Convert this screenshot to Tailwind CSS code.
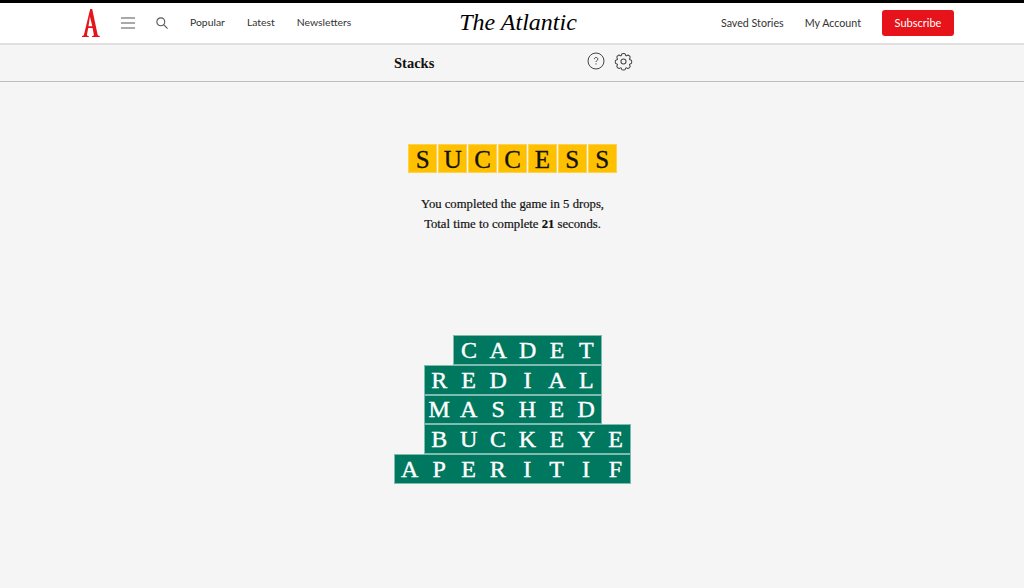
<!DOCTYPE html>
<html lang="en">
<head>
  <meta charset="UTF-8" />
  <title>Stacks | The Atlantic</title>
  <script src="https://cdn.jsdelivr.net/npm/@tailwindcss/browser@4"></script>
</head>
<body class="bg-[#f5f5f5] h-[588px] overflow-hidden text-[#111] font-['Liberation_Serif',serif]">

  <!-- Navbar -->
  <header class="bg-white h-[45px] border-t-[3px] border-black border-b-2 border-b-[#e0e0e0] flex items-center pl-[82px] pr-[70px] font-['Lato',sans-serif] text-[10.7px] text-[#333]">
    <svg class="w-[18px] h-[28px]" viewBox="0 0 18 28" fill="#e7131a">
      <path d="M8.2 0h2L15.6 25.6c.2 1 .8 1.3 2.2 1.4V28H10v-1c1.6-.1 2-.4 1.8-1.5L10.6 19H6.2L5 25.5c-.2 1.1.3 1.4 1.8 1.5v1H0v-1c1.3-.1 1.8-.5 2-1.5zM7.9 7.5L6.5 17.3h3.8z" />
    </svg>
    <svg class="w-[14px] h-[12px] ml-[21px]" viewBox="0 0 14 12" stroke="#555" stroke-width="1.2" fill="none">
      <path d="M0 1h14M0 6h14M0 11h14" />
    </svg>
    <svg class="w-[12px] h-[12px] ml-[21px]" viewBox="0 0 13 13" stroke="#555" stroke-width="1.2" fill="none">
      <circle cx="5.2" cy="5.2" r="4.3" />
      <path d="M8.3 8.3L12.5 12.500" />
    </svg>
    <a href="#" class="ml-[22px] text-[10.4px]">Popular</a>
    <a href="#" class="ml-[22px] text-[10.4px]">Latest</a>
    <a href="#" class="ml-[22px] text-[10.4px]">Newsletters</a>
    <a href="#" class="ml-[108px] -mt-[2px] shrink-0 text-[24px] italic text-black font-['Liberation_Serif',serif] leading-none whitespace-nowrap">The Atlantic</a>
    <a href="#" class="ml-auto">Saved Stories</a>
    <a href="#" class="ml-[21px]">My Account</a>
    <a href="#" class="ml-[21px] w-[72px] h-[26px] bg-[#e7131a] rounded-[3px] text-white flex items-center justify-center text-[11px]">Subscribe</a>
  </header>

  <!-- Game title bar -->
  <div class="h-[37px] border-b border-[#bdbdbd] flex items-center pl-[394px]">
    <h1 class="text-[14.5px] font-bold mt-px">Stacks</h1>
    <svg class="w-[18px] h-[18px] ml-[153px] -mt-[4px]" viewBox="0 0 18 18" fill="none" stroke="#444" stroke-width="1">
      <circle cx="9" cy="9" r="8" />
      <path d="M7.3 7.2c0-2.3 3.5-2.3 3.5-.1 0 1.3-1.8 1.3-1.8 2.9M9 11.4v1.1" />
    </svg>
    <svg class="w-[19px] h-[19px] ml-[9px] -mt-[4px]" viewBox="0 0 24 24" fill="none" stroke="#444" stroke-width="1.3" stroke-linecap="round" stroke-linejoin="round">
      <path d="M9.6 3.1c.4-1.5 4.4-1.5 4.8 0l.3 1.1c.1.5.8.8 1.3.5l1-.6c1.3-.8 4.1 2 3.3 3.3l-.6 1c-.3.5 0 1.2.5 1.3l1.1.3c1.5.4 1.5 4.4 0 4.8l-1.1.3c-.5.1-.8.8-.5 1.3l.6 1c.8 1.3-2 4.1-3.3 3.3l-1-.6c-.5-.3-1.2 0-1.3.5l-.3 1.1c-.4 1.5-4.4 1.5-4.8 0l-.3-1.1c-.1-.5-.8-.8-1.3-.5l-1 .6c-1.3.8-4.1-2-3.3-3.3l.6-1c.3-.5 0-1.2-.5-1.3l-1.1-.3c-1.5-.4-1.5-4.4 0-4.8l1.1-.3c.5-.1.8-.8.5-1.3l-.6-1c-.8-1.3 2-4.1 3.3-3.3l1 .6c.5.3 1.2 0 1.3-.5z" />
      <circle cx="12" cy="12" r="3.2" />
    </svg>
  </div>

  <main>
    <!-- Result -->
    <section class="pt-[62px] flex flex-col items-center pl-[1px]">
      <div id="success" class="flex gap-px"></div>
      <p class="mt-[21px] text-[12.7px] leading-[20px] text-center [-webkit-text-stroke:0.2px]">
        You completed the game in 5 drops,<br>
        Total time to complete <strong>21</strong> seconds.
      </p>
    </section>

    <!-- Stacked words -->
    <section id="stack" class="mt-[101px] pl-[394px] flex flex-col items-start"></section>
  </main>

  <script>
    const successEl = document.getElementById('success');
    'SUCCESS'.split('').forEach(letter => {
      const cell = document.createElement('div');
      cell.className = "w-[28.9px] h-[29px] pt-px bg-[#ffc000] border border-[#ffd24d] flex items-center justify-center text-[25px] leading-none [-webkit-text-stroke:0.3px]";
      cell.textContent = letter;
      successEl.appendChild(cell);
    });

    const words = [
      { text: 'CADET', offset: 2 },
      { text: 'REDIAL', offset: 1 },
      { text: 'MASHED', offset: 1 },
      { text: 'BUCKEYE', offset: 1 },
      { text: 'APERITIF', offset: 0 }
    ];
    const stackEl = document.getElementById('stack');
    words.forEach(word => {
      const row = document.createElement('div');
      row.className = "flex h-[29.8px] bg-[#00775f] border border-[#7fbbaf] text-white text-[24px] leading-none [-webkit-text-stroke:0.4px]";
      row.style.marginLeft = (word.offset * 29.6) + 'px';
      word.text.split('').forEach(letter => {
        const cell = document.createElement('div');
        cell.className = "w-[29.4px] flex items-center justify-center";
        cell.textContent = letter;
        row.appendChild(cell);
      });
      stackEl.appendChild(row);
    });
  </script>

</body>
</html>
